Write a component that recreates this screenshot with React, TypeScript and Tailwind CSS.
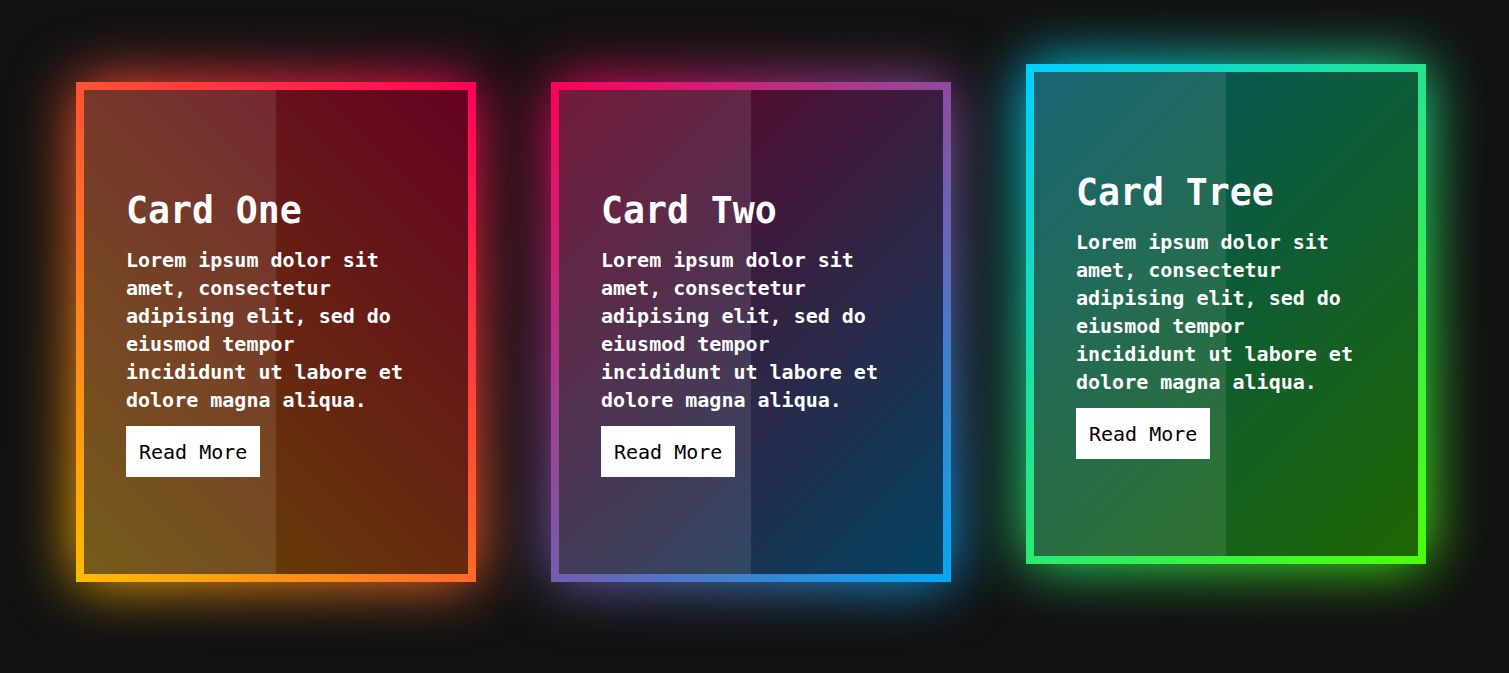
import React, { JSX } from "react";

type CardProps = {
  title: string;
  gradient: string;
  lift?: string;
};

const text =
  "Lorem ipsum dolor sit amet, consectetur adipising elit, sed do eiusmod tempor incididunt ut labore et dolore magna aliqua.";

const Card = ({ title, gradient, lift = "" }: CardProps): JSX.Element => {
  return (
    <div className={`relative w-[400px] h-[500px] shrink-0 ${lift}`}>
      {/* glow */}
      <div className={`absolute inset-0 blur-[30px] ${gradient}`} />

      <div className={`relative h-full p-[8px] ${gradient}`}>
        <div className="relative h-full bg-black/60 flex items-center pl-[42px]">
          <div className="absolute inset-y-0 left-0 w-1/2 bg-white/10" />

          <div className="relative w-[290px] pt-[2px] text-white">
            <h2 className="text-[36.5px] font-bold leading-[44px] mb-[13px]">{title}</h2>
            <p className="text-[20px] font-semibold leading-[28px] mb-[12px]">{text}</p>
            <a className="inline-flex items-center h-[51px] px-[13px] bg-white text-black text-[20px] leading-[28px]">
              Read More
            </a>
          </div>
        </div>
      </div>
    </div>
  );
};

export default function App(): JSX.Element {
  return (
    <div className="min-h-screen bg-[#111111] flex items-start gap-[75px] pl-[76px] pt-[82px] font-['DejaVu_Sans_Mono',monospace] overflow-hidden">
      <Card title="Card One" gradient="bg-[linear-gradient(45deg,#ffbc00,#ff0058)]" />
      <Card title="Card Two" gradient="bg-[linear-gradient(135deg,#ff0058,#03a9f4)]" />
      <Card
        title="Card Tree"
        gradient="bg-[linear-gradient(135deg,#00d0ff,#4dff03)]"
        lift="-translate-y-[18px]"
      />
    </div>
  );
}
